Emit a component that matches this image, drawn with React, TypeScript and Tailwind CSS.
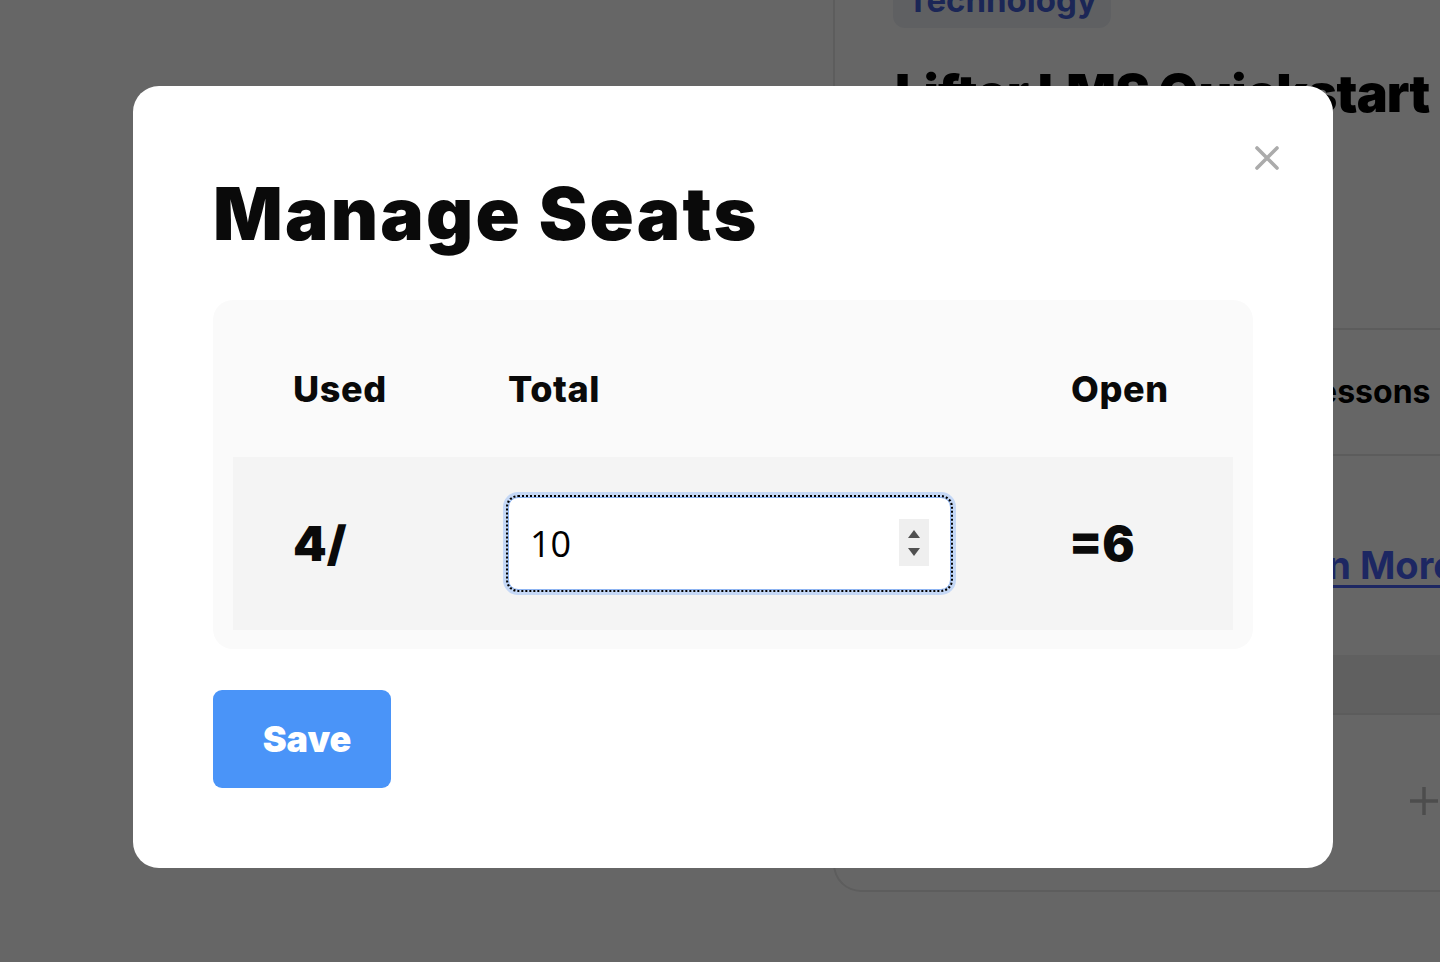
import React from "react";

export default function App() {
  return (
    <div className="relative h-[962px] w-[1440px] overflow-hidden bg-white font-['Inter',sans-serif]">
      {/* page behind the modal */}
      <div className="flex h-[962px]">
        <div className="w-[833px] shrink-0" />
        <div className="mt-[-52px] flex h-[944px] w-[700px] shrink-0 flex-col rounded-bl-[28px] border-b-2 border-l-2 border-[#e8e8e8] bg-white">
          <div className="pl-[58px] pt-[30px]">
            <span className="inline-block rounded-[12px] bg-[#eef0f6] px-[14px] pb-[8px] pt-[2px] text-[33px] font-bold leading-[40px] text-[#4560d8]">
              Technology
            </span>
          </div>
          <div className="mt-[36px] whitespace-nowrap pl-[60px] text-[52px] font-black leading-[60px] tracking-[-0.9px] text-black">
            Lifter LMS Quickstart
          </div>
          <div className="mt-[204px] flex h-[128px] items-center border-y-2 border-[#e6e6e6] pl-[465px] text-[32px] font-bold text-black">
            Lessons
          </div>
          <div className="flex h-[199px] items-center pl-[410px] pt-[20px]">
            <span className="whitespace-nowrap text-[38px] font-bold text-[#4a63f5] underline decoration-[3px] underline-offset-[6px]">
              Learn More
            </span>
          </div>
          <div className="h-[60px] border-b-2 border-[#e6e6e6] bg-[#f0f0f0]" />
          <div className="flex flex-1 items-center pl-[573px] pb-[4px] text-[#c0c0c0]">
            <svg width="32" height="32" viewBox="0 0 32 32" fill="none" stroke="currentColor" strokeWidth="3.5">
              <path d="M16 2v28M2 16h28" />
            </svg>
          </div>
        </div>
      </div>

      {/* overlay */}
      <div className="absolute inset-0 bg-black/60" />

      {/* modal */}
      <div className="absolute left-[133px] top-[86px] h-[782px] w-[1200px] rounded-[26px] bg-white px-[80px] pt-[88px]">
        <button className="absolute right-[53px] top-[59px] flex h-[26px] w-[26px] items-center justify-center text-[#ababab]">
          <svg width="26" height="26" viewBox="0 0 26 26" fill="none" stroke="currentColor" strokeWidth="3.6" strokeLinecap="round">
            <path d="M3 3l20 20M23 3L3 23" />
          </svg>
        </button>

        <h1 className="text-[73px] font-black leading-[80px] tracking-[2.2px] text-[#0a0a0a]">Manage Seats</h1>

        <div className="mt-[46px] rounded-[20px] bg-[#fafafa] px-[20px] pb-[19px]">
          <div className="flex h-[157px] items-center pt-[20px] text-[36px] font-extrabold leading-none tracking-[0.6px] text-[#0a0a0a]">
            <div className="w-[215px] pl-[60px]">Used</div>
            <div className="w-[563px] pl-[60px]">Total</div>
            <div className="w-[222px] pl-[60px]">Open</div>
          </div>
          <div className="flex h-[173px] items-center bg-[#f4f4f4] text-[48px] font-black leading-none text-[#0a0a0a]">
            <div className="w-[215px] pl-[60px]">4/</div>
            <div className="w-[563px] pl-[60px] pr-[60px]">
              <div className="relative h-[93px] w-[443px]">
                <input
                  type="text"
                  readOnly
                  value="10"
                  className="h-full w-full rounded-[10px] border border-[#8db4f2] bg-white pl-[21px] font-['Open_Sans',sans-serif] text-[36px] font-normal text-black shadow-[0_0_0_5px_#c5d8f6] outline-2 outline-dotted outline-black"
                />
                <div className="absolute right-[22px] top-[22px] flex h-[47px] w-[30px] flex-col items-center justify-center gap-[10px] bg-[#efefef]">
                  <svg width="12" height="8" viewBox="0 0 12 8"><path d="M6 0L12 8H0z" fill="#505050" /></svg>
                  <svg width="12" height="8" viewBox="0 0 12 8"><path d="M0 0h12L6 8z" fill="#505050" /></svg>
                </div>
              </div>
            </div>
            <div className="w-[222px] pl-[58px]">=6</div>
          </div>
        </div>

        <button className="mt-[41px] flex h-[98px] w-[178px] items-center justify-center rounded-[9px] bg-[#4a94f8] pl-[10px] text-[36px] font-black text-white">
          Save
        </button>
      </div>
    </div>
  );
}
